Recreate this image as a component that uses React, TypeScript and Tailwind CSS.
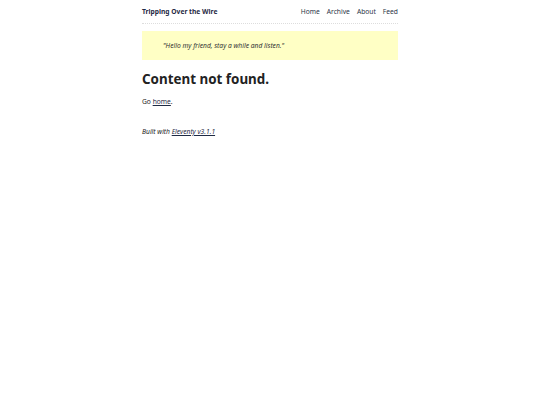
export default function App() {
  return (
    <div className="min-h-[405px] bg-white text-[#222] [font-family:'Noto_Sans',sans-serif]">
      <div className="mx-auto w-[256px]">
        <header className="flex items-center justify-between border-b border-dotted border-[#ddd] pt-[7px] pb-[6px] text-[6.7px] leading-[10px]">
          <a className="font-bold text-[#1f2a44]">Tripping Over the Wire</a>
          <nav className="flex gap-[7px] text-[#2a3346]">
            <a>Home</a>
            <a>Archive</a>
            <a>About</a>
            <a>Feed</a>
          </nav>
        </header>
        <div className="mt-[7px] bg-[#ffffc5] py-[9.5px] pl-[21px] text-[6.7px] italic leading-[10px] text-[#333]">
          "Hello my friend, stay a while and listen."
        </div>
        <main>
          <h1 className="mt-[10px] text-[13.4px] font-bold leading-[18px] text-[#222]">Content not found.</h1>
          <p className="mt-[9px] text-[6.7px] leading-[10px]">
            Go <a className="underline text-[#1f2a44]">home</a>.
          </p>
        </main>
        <footer className="mt-[20px] text-[6.7px] italic leading-[10px]">
          Built with <a className="underline text-[#1f2a44]">Eleventy v3.1.1</a>
        </footer>
      </div>
    </div>
  );
}
